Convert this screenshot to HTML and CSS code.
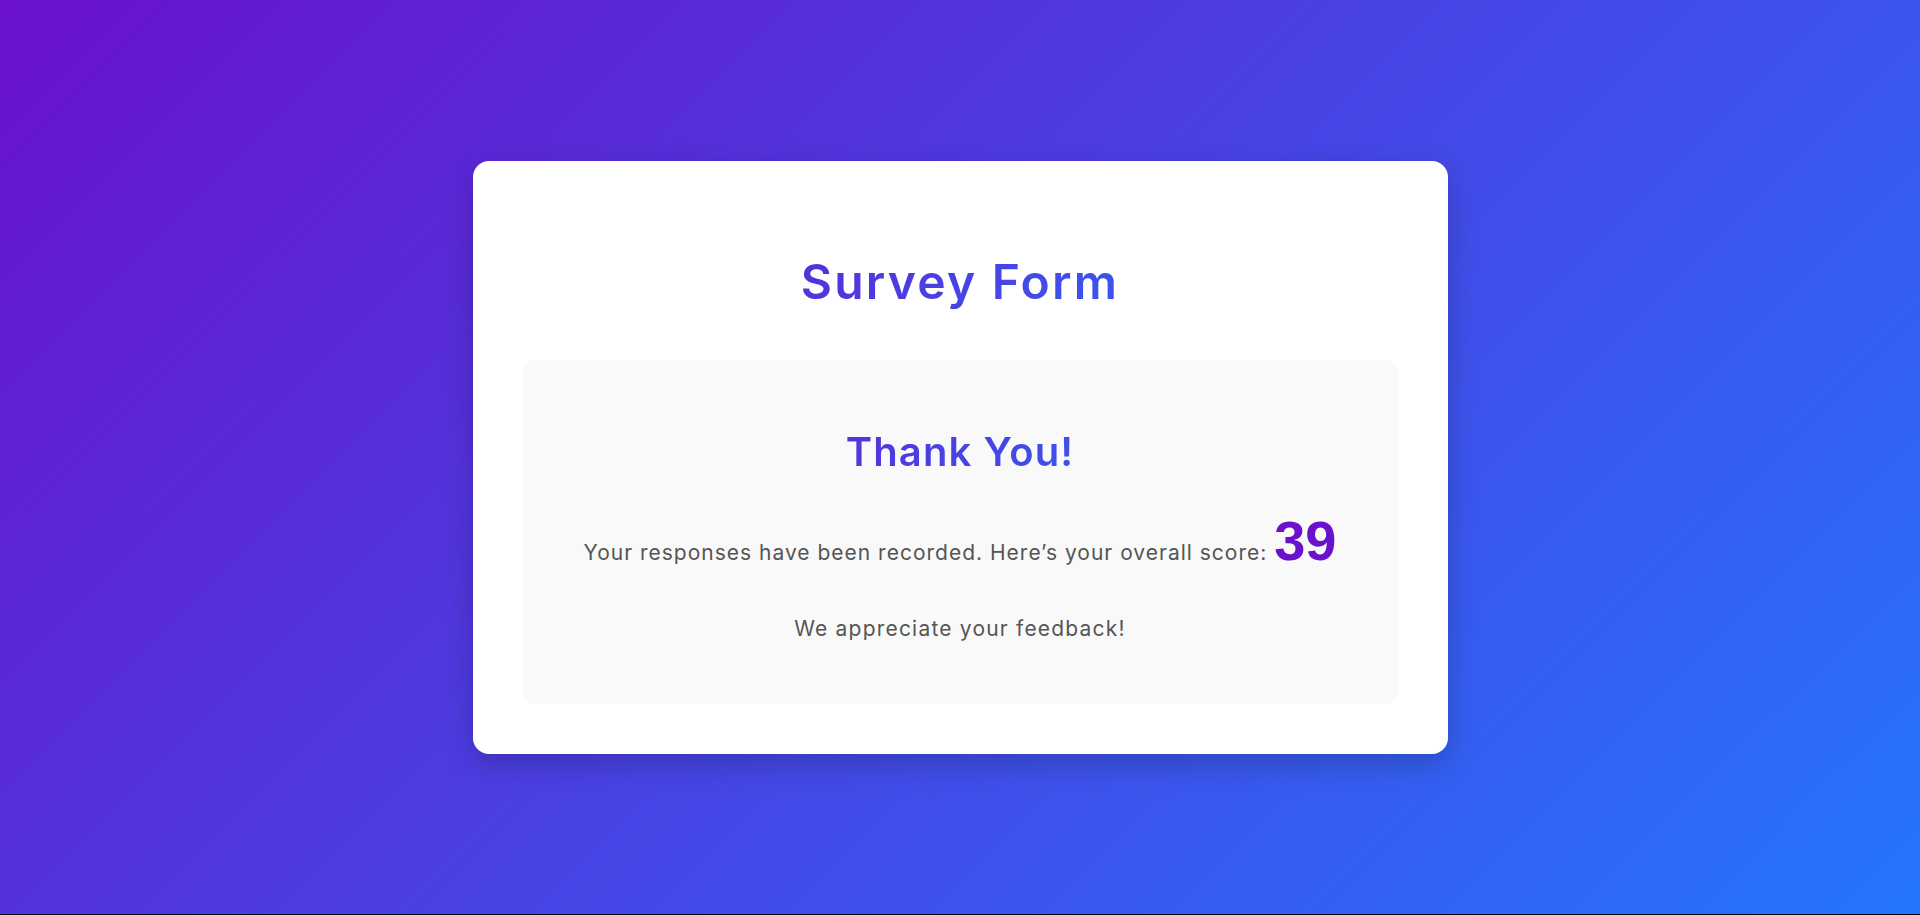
FILE: index.html
```html
<!DOCTYPE html>
<html lang="en">
<head>
<meta charset="UTF-8">
<title>Survey Form</title>
<link rel="stylesheet" href="styles.css">
</head>
<body>
  <main class="card">
    <h1 class="title">Survey Form</h1>
    <section class="result">
      <h2 class="result-title">Thank You!</h2>
      <p class="result-text">Your responses have been recorded. Here’s your overall score: <span class="score">39</span></p>
      <p class="result-note">We appreciate your feedback!</p>
    </section>
  </main>
</body>
</html>
```
FILE: styles.css
```css
html {
  background: #000;
}
body {
  margin: 0;
  height: calc(100vh - 1px);
  background: linear-gradient(135deg, #6a11cb 0%, #2575fc 100%);
  display: flex;
  align-items: center;
  justify-content: center;
  font-family: "Inter", "Noto Sans", sans-serif;
}
.card {
  box-sizing: border-box;
  width: 975px;
  padding: 50px;
  background: #fff;
  border-radius: 16px;
  box-shadow: 0 10px 30px rgba(0, 0, 0, 0.2);
  display: flex;
  flex-direction: column;
}
.title {
  margin: 42px 0 49px;
  font-size: 48px;
  line-height: 58px;
  font-weight: 600;
  letter-spacing: 2.2px;
  text-align: center;
  background: linear-gradient(135deg, #6a11cb 0%, #2575fc 100%);
  -webkit-background-clip: text;
  background-clip: text;
  color: transparent;
}
.result {
  background: #f9f9f9;
  border-radius: 12px;
  padding: 40px;
  text-align: center;
}
.result-title {
  margin: 28px 0 37px;
  font-size: 40px;
  line-height: 48px;
  font-weight: 600;
  letter-spacing: 1.1px;
  background: linear-gradient(135deg, #6a11cb 0%, #2575fc 100%);
  -webkit-background-clip: text;
  background-clip: text;
  color: transparent;
}
.result-text,
.result-note {
  margin: 0;
  font-size: 21px;
  line-height: 30px;
  color: #555;
  letter-spacing: 1px;
}
.result-note {
  margin: 45px 0 20px;
  letter-spacing: 1.2px;
}
.score {
  font-family: "Liberation Sans", Arial, sans-serif;
  font-size: 56px;
  line-height: 56px;
  font-weight: 700;
  color: #6a11cb;
  letter-spacing: 0;
}
```
